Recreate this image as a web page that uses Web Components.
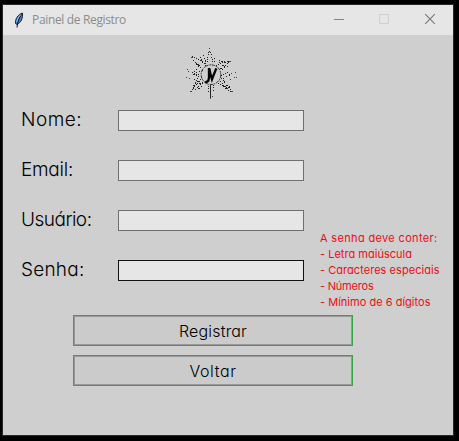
<!DOCTYPE html>
<html lang="pt"><head><meta charset="utf-8"><title>Painel de Registro</title>
<style>html,body{margin:0;background:#000;overflow:hidden}body{height:441px}</style></head>
<body><register-window></register-window>
<script>
// Text whose letter spacing is adjusted to a given advance width
class FitText extends HTMLElement{
  connectedCallback(){
    const r=this.attachShadow({mode:'open'});
    r.innerHTML='<style>:host{display:inline-block;white-space:nowrap}span{display:inline-block}</style><span><slot></slot></span>';
    const s=r.querySelector('span'),w=+this.getAttribute('width'),n=this.textContent.length;
    s.style.letterSpacing=(w-s.getBoundingClientRect().width)/n+'px';
  }
}
class TitleBar extends HTMLElement{
  connectedCallback(){
    this.attachShadow({mode:'open'}).innerHTML=`<style>
    :host{display:flex;height:30px;background:#e6e6e6;color:#8c8c8c;font:12px/30px "Open Sans",sans-serif;align-items:center}
    .f{margin-left:10px;width:12px;height:18px}.t{margin-left:7px;flex:1;height:30px}
    .c{width:136px;height:30px}</style>
    <svg class="f" viewBox="0 0 12 18"><path d="M9.500 2C5 3.500 2 8 2.500 12.500L4 13.500c4-2 6-6 5.500-11.500z" fill="#3f7fcb" stroke="#222" stroke-width="1"/><path d="M8.500 3.500C6 7 4.500 11 4 16.500" stroke="#111" fill="none"/><path d="M7.500 4C5 6.500 4 9 3.800 11" stroke="#a7c6e5" fill="none"/></svg>
    <span class="t"><fit-text width="94">Painel de Registro</fit-text></span>
    <svg class="c" viewBox="317 5 136 30"><path d="M334 19.500h10" stroke="#858585"/><path d="M379.500 14.500h9v9h-9z" fill="none" stroke="#d0d0d0"/><path d="M425.200 14.200l9.600 9.600m0-9.600l-9.600 9.600" stroke="#777" stroke-width="1.100"/></svg>`;
  }
}
class StarLogo extends HTMLElement{
  connectedCallback(){
    this.attachShadow({mode:'open'}).innerHTML=`<style>:host{display:block;width:64px;height:62px}svg{display:block}</style>
    <svg width="64" height="62" viewBox="0 0 192 186" fill="none" stroke="#222">
    <circle cx="93" cy="98" r="29.500" stroke-width="2.800" stroke-dasharray="10 3 5 2"/>
    <path stroke="#000" stroke-width="7" d="M87 78v29l-2 9-9 6M88 80l3 14 5 18 6-16 7-17"/>
    <path stroke-width="3" d="M91.500 128v42"/>
    <g stroke-width="3" shape-rendering="crispEdges">
    <path stroke-dasharray="3 4" d="M88 19v14M86 30l-5 35M92 30l7 34M36 43l27 13 13 15M41 55l20 25M61 46l14 23M150 57l-24 4-19 12M147 59l-24 29M126 57l-17 14M43 87l18 14M37 91l21 17M57 103l-23 48M63 112l-24 28M68 122l-29 28M145 90l-21 10M124 108l32 39M121 118l30 32M114 124l30 13M84 132v20M99 129v21"/>
    <path stroke-dasharray="3 7" d="M32 45h16M48 64l18 9M71 39l7 28M104 47l-3 19M116 56l27 9M130 71l18 2M124 80l17-10M39 96l19 3M48 82l14 11M43 112l20 14M39 130l23-8M56 141l15-13M128 129l21 4M138 141l-18-18M150 98l-22 12M54 68l15 17M134 61l-12 20M78 54l-1 17"/>
    <path stroke="#444" d="M18 107h3M24 89h3M21 81h2M27 109h3M166 92h3M162 107h3M168 107h2M153 95h3M150 111h3M34 45h4M31 149h4M154 149h4M148 58h4M87 20h3M96 162h3"/></g>
    </svg>`;
  }
}
class FormRow extends HTMLElement{
  connectedCallback(){
    this.attachShadow({mode:'open'}).innerHTML=`<style>:host{display:flex;height:21px;align-items:center}
    label{width:97px;font-size:19px;line-height:21px;padding-bottom:3px}
    input{box-sizing:border-box;width:186px;height:21px;margin:0;padding:0 3px;border:1px solid #6f6f6f;border-radius:0;background:#e6e6e6;outline:0}
    :host([strong]) input{border-color:#111}</style>
    <label><fit-text width="${this.getAttribute('w')}">${this.getAttribute('label')}</fit-text></label><input>`;
  }
}
class FormButton extends HTMLElement{
  connectedCallback(){
    this.attachShadow({mode:'open'}).innerHTML=`<style>:host{display:block;width:280px;height:31px}
    button{box-sizing:border-box;width:100%;height:100%;border:1px solid #3ca149;box-shadow:inset 0 0 0 1px #999;background:#cbcbcb;padding:0;font:inherit;font-size:16px;color:inherit;font-feature-settings:inherit}</style>
    <button><fit-text width="${this.getAttribute('w')}">${this.getAttribute('label')}</fit-text></button>`;
  }
}
class PasswordHint extends HTMLElement{
  connectedCallback(){
    this.attachShadow({mode:'open'}).innerHTML=`<style>:host{display:flex;flex-direction:column;color:#f00d12;font-size:11px;line-height:16px;font-weight:400}</style>
    <fit-text width="117.500">A senha deve conter:</fit-text><fit-text width="92">- Letra maiúscula</fit-text><fit-text width="119.500">- Caracteres especiais</fit-text><fit-text width="53.500">- Números</fit-text><fit-text width="110.500">- Mínimo de 6 dígitos</fit-text>`;
  }
}
class RegisterWindow extends HTMLElement{
  connectedCallback(){
    this.attachShadow({mode:'open'}).innerHTML=`<style>
    :host{display:block;box-sizing:border-box;padding:4px 0 0 2px}
    .w{width:450px;border:1px solid #292929;background:#cfcfcf;height:430px}
    main{display:grid;grid-template-columns:317px 133px;font:300 19px Inter,sans-serif;font-feature-settings:"cv11";color:#000}
    star-logo{grid-column:1/3;margin:7px 0 0 177px}
    .rows{display:flex;flex-direction:column;gap:29px;padding:6px 0 0 18px;height:205px}
    password-hint{margin-top:126px;height:80px}
    .buttons{grid-column:1/3;display:flex;flex-direction:column;gap:9px;margin:0 0 0 70px}</style>
    <div class="w"><title-bar></title-bar><main><star-logo></star-logo>
    <div class="rows"><form-row label="Nome:" w="61"></form-row><form-row label="Email:" w="52"></form-row><form-row label="Usuário:" w="70.500"></form-row><form-row label="Senha:" w="63.500" strong></form-row></div>
    <password-hint></password-hint>
    <div class="buttons"><form-button label="Registrar" w="68"></form-button><form-button label="Voltar" w="47"></form-button></div></main></div>`;
  }
}
customElements.define('fit-text',FitText);
customElements.define('title-bar',TitleBar);
customElements.define('star-logo',StarLogo);
customElements.define('form-row',FormRow);
customElements.define('form-button',FormButton);
customElements.define('password-hint',PasswordHint);
customElements.define('register-window',RegisterWindow);
</script></body></html>
